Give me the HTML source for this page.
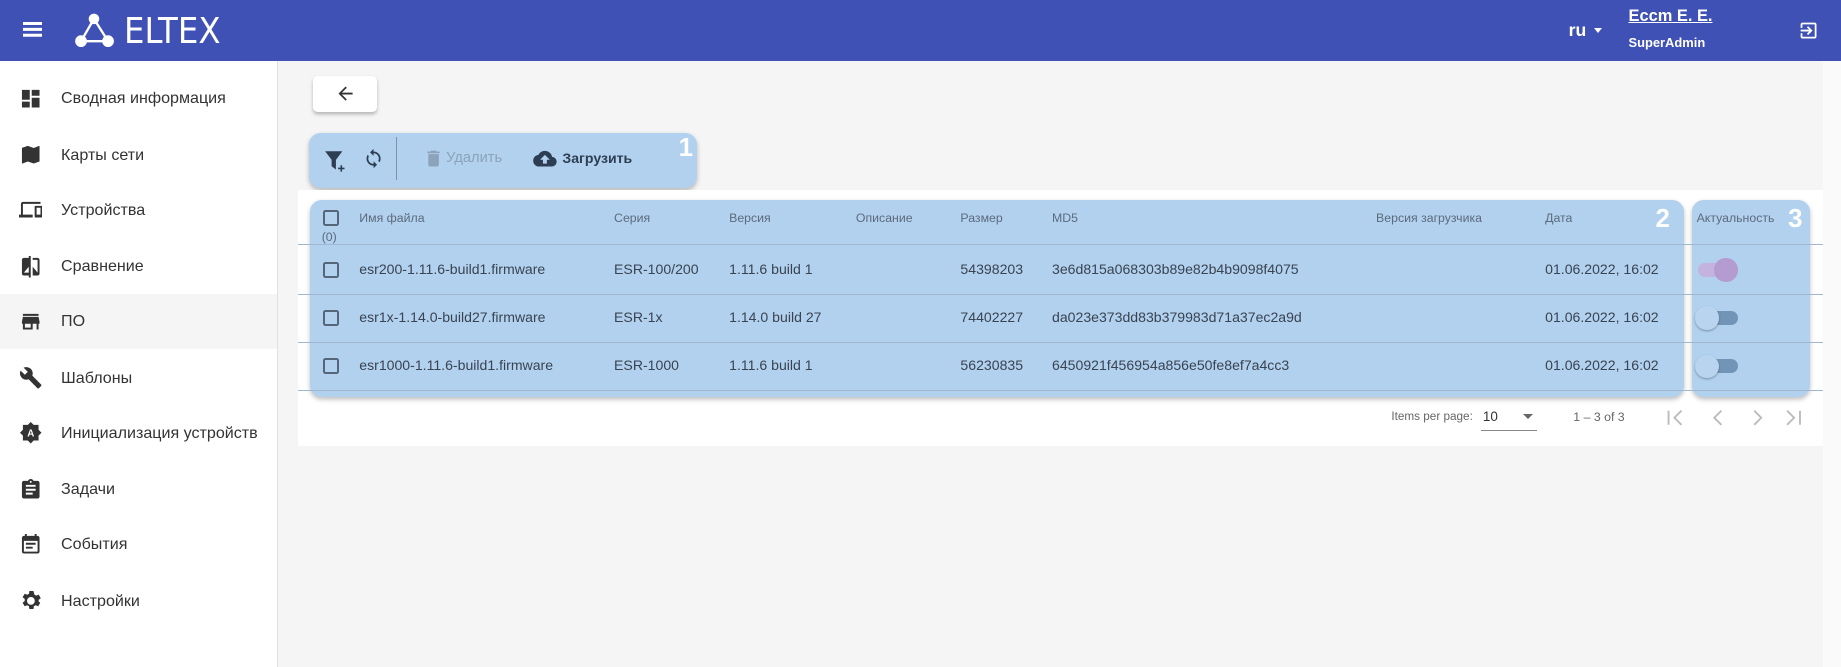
<!DOCTYPE html>
<html><head><meta charset="utf-8"><style>
html,body{margin:0;padding:0}
body{zoom:1.17411;width:1568px;height:568px;overflow:hidden;position:relative;background:#fafafa;font-family:"Liberation Sans",sans-serif;color:#333}
.abs{position:absolute}
.hdr{left:0;top:0;width:1568px;height:52px;background:#3f51b5;color:#fff}
.side{left:0;top:52px;width:236px;height:516px;background:#fff;border-right:1px solid #e0e0e0}
.item{position:absolute;left:0;width:236px;height:47px;font-size:13.7px;color:#333}
.item .t{position:absolute;left:52px;top:16px}
.item svg{position:absolute;left:16px;top:14px}
.main{left:237px;top:52px;width:1316px;height:516px;background:#f5f5f5}
.hl{background:#b1d1ef;border-radius:10px;box-shadow:0 2px 4px rgba(0,0,0,.25)}
.num{color:#fff;font-weight:bold;font-size:22px;position:absolute}
.th{position:absolute;top:180px;font-size:10.5px;color:#5d6b7c}
.td{position:absolute;font-size:12px;color:#3a4350}
.cb{position:absolute;width:10px;height:10px;border:2px solid #55657a;border-radius:2px;left:275px}
.line{position:absolute;left:254px;width:1299px;height:1px;background:#9fb8d0}
</style></head><body>
<div class="abs hdr">
  <div class="abs" style="left:20px;top:19px;width:16px;height:2px;background:#fff;box-shadow:0 5px 0 #fff,0 10px 0 #fff"></div>
  <svg class="abs" style="left:63px;top:11px" width="38" height="30" viewBox="0 0 38 30"><path d="M17 5 L6 24 M6 24 H29 M17 5 L29 24" stroke="#fff" stroke-width="2"/><circle cx="17" cy="5" r="4.5" fill="#fff"/><circle cx="6" cy="24" r="5" fill="#fff"/><circle cx="29" cy="24" r="5" fill="#fff"/></svg>
  <div class="abs" style="left:106px;top:9px;font-size:30px;font-family:'DejaVu Sans',sans-serif;transform:scaleX(0.92);transform-origin:left">ELTEX</div>
  <div class="abs" style="left:1336px;top:17px;font-size:15px;font-weight:bold">ru</div>
  <div class="abs" style="left:1358px;top:24px;border:4px solid transparent;border-top:5px solid #fff"></div>
  <div class="abs" style="left:1387px;top:6px;font-size:14px;font-weight:bold;text-decoration:underline">Ессm Е. Е.</div>
  <div class="abs" style="left:1387px;top:30px;font-size:11px;font-weight:bold">SuperAdmin</div>
  <svg class="abs" style="left:1531px;top:17px" width="18" height="18" viewBox="0 0 24 24"><path fill="#fff" d="M10.09 15.59L11.5 17l5-5-5-5-1.41 1.41L12.67 11H3v2h9.67l-2.58 2.59zM19 3H5c-1.11 0-2 .9-2 2v4h2V5h14v14H5v-4H3v4c0 1.1.89 2 2 2h14c1.1 0 2-.9 2-2V5c0-1.1-.9-2-2-2z"/></svg>
</div>
<div class="abs side">
  <div class="item" style="top:8px"><svg width="20" height="20" viewBox="0 0 24 24"><path fill="#333" d="M3 13h8V3H3v10zm0 8h8v-6H3v6zm10 0h8V11h-8v10zm0-18v6h8V3h-8z"/></svg><span class="t">Сводная информация</span></div>
  <div class="item" style="top:56px"><svg width="20" height="20" viewBox="0 0 24 24"><path fill="#333" d="M20.5 3l-.16.03L15 5.1 9 3 3.36 4.9c-.21.07-.36.25-.36.48V20.5c0 .28.22.5.5.5l.16-.03L9 18.9l6 2.1 5.64-1.9c.21-.07.36-.25.36-.48V3.5c0-.28-.22-.5-.5-.5z"/></svg><span class="t">Карты сети</span></div>
  <div class="item" style="top:103px"><svg width="20" height="20" viewBox="0 0 24 24"><path fill="#333" d="M4 6h18V4H4c-1.1 0-2 .9-2 2v11H0v3h14v-3H4V6zm19 2h-6c-.55 0-1 .45-1 1v10c0 .55.45 1 1 1h6c.55 0 1-.45 1-1V9c0-.55-.45-1-1-1zm-1 9h-4v-7h4v7z"/></svg><span class="t">Устройства</span></div>
  <div class="item" style="top:151px"><svg width="20" height="20" viewBox="0 0 24 24"><path fill="#333" d="M10 3H5c-1.1 0-2 .9-2 2v14c0 1.1.9 2 2 2h5v2h2V1h-2v2zm0 15H5l5-6v6zm9-15h-5v2h5v13l-5-6v9h5c1.1 0 2-.9 2-2V5c0-1.1-.9-2-2-2z"/></svg><span class="t">Сравнение</span></div>
  <div class="item" style="top:198px;background:#f5f5f5"><svg width="20" height="20" viewBox="0 0 24 24"><path fill="#333" d="M20 4H4v2h16V4zm1 10v-2l-1-5H4l-1 5v2h1v6h10v-6h4v6h2v-6h1zm-9 4H6v-4h6v4z"/></svg><span class="t">ПО</span></div>
  <div class="item" style="top:246px"><svg width="20" height="20" viewBox="0 0 24 24"><path fill="#333" d="M22.7 19l-9.1-9.1c.9-2.3.4-5-1.5-6.9-2-2-5-2.4-7.4-1.3L9 6 6 9 1.6 4.7C.4 7.1.9 10.1 2.9 12.1c1.9 1.9 4.6 2.4 6.9 1.5l9.1 9.1c.4.4 1 .4 1.4 0l2.3-2.3c.5-.4.5-1.1.1-1.4z"/></svg><span class="t">Шаблоны</span></div>
  <div class="item" style="top:293px"><svg width="20" height="20" viewBox="0 0 24 24"><path fill="#333" d="M12 1l3 3h5v5l3 3-3 3v5h-5l-3 3-3-3H4v-5l-3-3 3-3V4h5z"/><text x="12" y="16" font-size="10" fill="#fff" text-anchor="middle" font-weight="bold" font-family="Liberation Sans">A</text></svg><span class="t">Инициализация устройств</span></div>
  <div class="item" style="top:341px"><svg width="20" height="20" viewBox="0 0 24 24"><path fill="#333" d="M19 3h-4.18C14.4 1.84 13.3 1 12 1s-2.4.84-2.82 2H5c-1.1 0-2 .9-2 2v14c0 1.1.9 2 2 2h14c1.1 0 2-.9 2-2V5c0-1.1-.9-2-2-2zm-7 0c.55 0 1 .45 1 1s-.45 1-1 1-1-.45-1-1 .45-1 1-1zm2 14H7v-2h7v2zm3-4H7v-2h10v2zm0-4H7V7h10v2z"/></svg><span class="t">Задачи</span></div>
  <div class="item" style="top:388px"><svg width="20" height="20" viewBox="0 0 24 24"><path fill="#333" d="M17 10H7v2h10v-2zm2-7h-1V1h-2v2H8V1H6v2H5c-1.11 0-2 .9-2 2v14c0 1.1.89 2 2 2h14c1.1 0 2-.9 2-2V5c0-1.1-.9-2-2-2zm0 16H5V8h14v11zm-5-5H7v2h7v-2z"/></svg><span class="t">События</span></div>
  <div class="item" style="top:436px"><svg width="22" height="22" viewBox="0 0 24 24" style="left:15px;top:13px"><path fill="#333" d="M19.14 12.94c.04-.3.06-.61.06-.94s-.02-.64-.07-.94l2.03-1.58-1.92-3.32-2.39.96c-.5-.38-1.03-.7-1.62-.94L14.4 2.81h-3.84l-.36 2.54c-.59.24-1.13.57-1.62.94l-2.39-.96-1.92 3.32 2.03 1.58c-.05.3-.09.63-.09.94s.02.64.07.94l-2.03 1.58 1.92 3.32 2.39-.96c.5.38 1.03.7 1.62.94l.36 2.54h3.84l.36-2.54c.59-.24 1.13-.56 1.62-.94l2.39.96 1.92-3.32-2.03-1.58zM12 15.6c-1.98 0-3.6-1.62-3.6-3.6s1.62-3.6 3.6-3.6 3.6 1.62 3.6 3.6-1.62 3.6-3.6 3.6z"/></svg><span class="t">Настройки</span></div>
</div>
<div class="abs main"></div>
<div class="abs" style="left:267px;top:65px;width:54px;height:30px;background:#fff;border-radius:4px;box-shadow:0 2px 3px rgba(0,0,0,.25)"><svg style="position:absolute;left:18px;top:6px" width="18" height="18" viewBox="0 0 24 24"><path fill="#333" d="M20 11H7.83l5.59-5.59L12 4l-8 8 8 8 1.41-1.41L7.83 13H20v-2z"/></svg></div>
<div class="abs hl" style="left:263px;top:113px;width:331px;height:47px"></div>
<svg class="abs" style="left:275px;top:126px" width="22" height="22" viewBox="0 0 24 24"><path fill="#2e3e52" d="M2 3h16l-6 8v9l-4-3v-6z"/><path d="M17 16v6M14 19h6" stroke="#2e3e52" stroke-width="1.5"/></svg>
<svg class="abs" style="left:309px;top:126px" width="18" height="18" viewBox="0 0 24 24"><path fill="#2e3e52" d="M12 4V1L8 5l4 4V6c3.31 0 6 2.69 6 6 0 1.01-.25 1.97-.7 2.8l1.46 1.46C19.54 15.03 20 13.57 20 12c0-4.42-3.58-8-8-8zm0 14c-3.31 0-6-2.69-6-6 0-1.01.25-1.97.7-2.8L5.24 7.74C4.46 8.97 4 10.43 4 12c0 4.42 3.58 8 8 8v3l4-4-4-4v3z"/></svg>
<div class="abs" style="left:337px;top:117px;width:1px;height:36px;background:#7d93aa"></div>
<svg class="abs" style="left:360px;top:126px" width="18" height="18" viewBox="0 0 24 24"><path fill="#8ca3b9" d="M6 19c0 1.1.9 2 2 2h8c1.1 0 2-.9 2-2V7H6v12zM19 4h-3.5l-1-1h-5l-1 1H5v2h14V4z"/></svg>
<div class="abs" style="left:380px;top:128px;font-size:12.5px;color:#8ca3b9">Удалить</div>
<svg class="abs" style="left:453px;top:125px" width="22" height="20" viewBox="0 0 24 24"><path fill="#2e3e52" d="M19.35 10.04C18.67 6.59 15.64 4 12 4 9.11 4 6.6 5.64 5.35 8.04 2.34 8.36 0 10.91 0 14c0 3.31 2.69 6 6 6h13c2.76 0 5-2.24 5-5 0-2.64-2.05-4.78-4.65-4.96zM14 13v4h-4v-4H7l5-5 5 5h-3z"/></svg>
<div class="abs" style="left:479px;top:128px;font-size:12px;color:#2e3e52;font-weight:bold">Загрузить</div>
<div class="num" style="left:578px;top:114px">1</div>
<div class="abs" style="left:254px;top:162px;width:1299px;height:218px;background:#fff"></div>
<div class="abs hl" style="left:264px;top:170px;width:1170px;height:168px"></div>
<div class="abs hl" style="left:1441px;top:170px;width:101px;height:168px"></div>
<div class="line" style="top:208px"></div><div class="line" style="top:250px"></div><div class="line" style="top:291px"></div><div class="line" style="top:332px"></div>
<div class="num" style="left:1410px;top:175px">2</div>
<div class="num" style="left:1523px;top:175px">3</div>
<div class="cb" style="top:179px"></div>
<div class="th" style="left:274px;top:196px">(0)</div>
<div class="th" style="left:306px">Имя файла</div>
<div class="th" style="left:523px">Серия</div>
<div class="th" style="left:621px">Версия</div>
<div class="th" style="left:729px">Описание</div>
<div class="th" style="left:818px">Размер</div>
<div class="th" style="left:896px">MD5</div>
<div class="th" style="left:1172px">Версия загрузчика</div>
<div class="th" style="left:1316px">Дата</div>
<div class="th" style="left:1445px">Актуальность</div>

<div class="cb" style="top:223px"></div>
<div class="td" style="left:306px;top:222px">esr200-1.11.6-build1.firmware</div>
<div class="td" style="left:523px;top:222px">ESR-100/200</div>
<div class="td" style="left:621px;top:222px">1.11.6 build 1</div>
<div class="td" style="left:818px;top:222px">54398203</div>
<div class="td" style="left:896px;top:222px">3e6d815a068303b89e82b4b9098f4075</div>
<div class="td" style="left:1316px;top:222px">01.06.2022, 16:02</div>
<div class="abs" style="left:1446px;top:224px;width:34px;height:12px;border-radius:6px;background:#c3b3de"></div>
<div class="abs" style="left:1460px;top:220px;width:20px;height:20px;border-radius:50%;background:#b49bd0"></div>

<div class="cb" style="top:264px"></div>
<div class="td" style="left:306px;top:263px">esr1x-1.14.0-build27.firmware</div>
<div class="td" style="left:523px;top:263px">ESR-1x</div>
<div class="td" style="left:621px;top:263px">1.14.0 build 27</div>
<div class="td" style="left:818px;top:263px">74402227</div>
<div class="td" style="left:896px;top:263px">da023e373dd83b379983d71a37ec2a9d</div>
<div class="td" style="left:1316px;top:263px">01.06.2022, 16:02</div>
<div class="abs" style="left:1446px;top:265px;width:34px;height:12px;border-radius:6px;background:#7294b6"></div>
<div class="abs" style="left:1444px;top:261px;width:20px;height:20px;border-radius:50%;background:#b8d4ee;box-shadow:0 1px 2px rgba(0,0,0,.3)"></div>

<div class="cb" style="top:305px"></div>
<div class="td" style="left:306px;top:304px">esr1000-1.11.6-build1.firmware</div>
<div class="td" style="left:523px;top:304px">ESR-1000</div>
<div class="td" style="left:621px;top:304px">1.11.6 build 1</div>
<div class="td" style="left:818px;top:304px">56230835</div>
<div class="td" style="left:896px;top:304px">6450921f456954a856e50fe8ef7a4cc3</div>
<div class="td" style="left:1316px;top:304px">01.06.2022, 16:02</div>
<div class="abs" style="left:1446px;top:306px;width:34px;height:12px;border-radius:6px;background:#7294b6"></div>
<div class="abs" style="left:1444px;top:302px;width:20px;height:20px;border-radius:50%;background:#b8d4ee;box-shadow:0 1px 2px rgba(0,0,0,.3)"></div>
<div class="abs" style="left:1185px;top:349px;font-size:10px;color:#666">Items per page:</div>
<div class="abs" style="left:1263px;top:348px;font-size:11.5px;color:#333">10</div>
<div class="abs" style="left:1261px;top:366px;width:48px;height:1px;background:#888"></div>
<div class="abs" style="left:1297px;top:353px;border:5px solid transparent;border-top:5px solid #666"></div>
<div class="abs" style="left:1340px;top:349px;font-size:10.5px;color:#666">1 – 3 of 3</div>
<svg class="abs" style="left:1418px;top:346px" width="120" height="20" viewBox="0 0 120 20" fill="none" stroke="#bbb" stroke-width="1.6"><path d="M3 4v12M14 4l-6 6 6 6M48 4l-6 6 6 6M76 4l6 6-6 6M104 4l6 6-6 6M115 4v12"/></svg>
</body></html>
